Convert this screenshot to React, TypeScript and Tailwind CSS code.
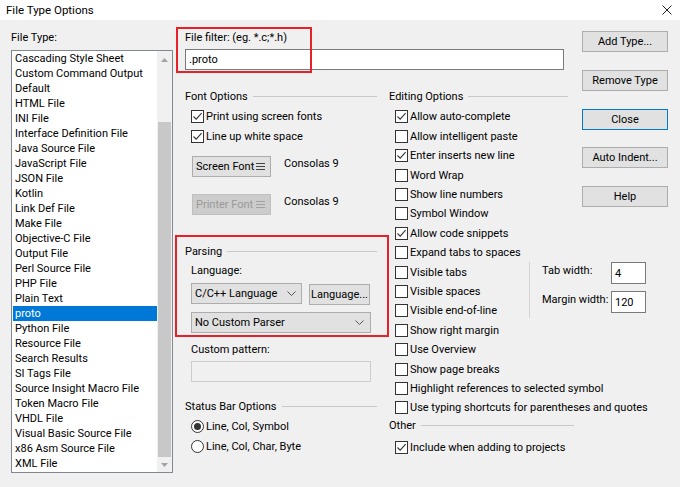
import React from "react";

const fileTypes = [
  "Cascading Style Sheet",
  "Custom Command Output",
  "Default",
  "HTML File",
  "INI File",
  "Interface Definition File",
  "Java Source File",
  "JavaScript File",
  "JSON File",
  "Kotlin",
  "Link Def File",
  "Make File",
  "Objective-C File",
  "Output File",
  "Perl Source File",
  "PHP File",
  "Plain Text",
  "proto",
  "Python File",
  "Resource File",
  "Search Results",
  "SI Tags File",
  "Source Insight Macro File",
  "Token Macro File",
  "VHDL File",
  "Visual Basic Source File",
  "x86 Asm Source File",
  "XML File",
];

function CheckBox({ checked }: { checked?: boolean }) {
  return (
    <span className="w-[13px] h-[13px] border border-[#333333] bg-white flex items-center justify-center shrink-0">
      {checked && (
        <svg width="11" height="11" viewBox="0 0 11 11">
          <path d="M1.5 5.5 L4.2 8.2 L9.6 2.2" stroke="#333333" strokeWidth="1.1" fill="none" />
        </svg>
      )}
    </span>
  );
}

function CheckRow({ label, checked }: { label: string; checked?: boolean }) {
  return (
    <div className="h-[19.4px] flex items-center gap-[2px] pl-[6px] whitespace-nowrap">
      <CheckBox checked={checked} />
      <span className="leading-[15px]">{label}</span>
    </div>
  );
}

function Radio({ label, selected }: { label: string; selected?: boolean }) {
  return (
    <div className="h-[20px] flex items-center gap-[2px] pl-[6px] whitespace-nowrap">
      <span className="w-[13px] h-[13px] rounded-full border border-[#333333] bg-white flex items-center justify-center shrink-0">
        {selected && <span className="w-[7px] h-[7px] rounded-full bg-[#333333]" />}
      </span>
      <span className="leading-[15px]">{label}</span>
    </div>
  );
}

function GroupHeader({ title, width }: { title: string; width: string }) {
  return (
    <div className={`h-[16px] flex items-center ${width}`}>
      <span className="leading-[15px] whitespace-nowrap">{title}</span>
      <span className="flex-1 ml-[5px] h-px bg-[#c8c8c8]" />
    </div>
  );
}

function Chevron() {
  return (
    <svg width="9" height="5" viewBox="0 0 9 5">
      <path d="M0.5 0.5 L4.5 4.5 L8.5 0.5" stroke="#555555" strokeWidth="1" fill="none" />
    </svg>
  );
}

function MenuLines({ color }: { color: string }) {
  return (
    <svg width="9" height="9" viewBox="0 0 9 9">
      <path d="M0 1.5 H9 M0 4.5 H9 M0 7.5 H9" stroke={color} strokeWidth="1" />
    </svg>
  );
}

function Button({ label, focused }: { label: string; focused?: boolean }) {
  return (
    <div
      className={`h-[21px] w-[86px] flex items-center justify-center bg-[#e1e1e1] border ${
        focused ? "border-[#0078d7]" : "border-[#adadad]"
      } leading-[15px]`}
    >
      {label}
    </div>
  );
}

export default function App() {
  return (
    <div className="w-[680px] h-[487px] bg-[#f0f0f0] text-[11px] text-black font-['Roboto','Noto_Sans_CJK_SC',sans-serif] overflow-hidden relative">
      {/* title bar */}
      <div className="h-[20px] bg-white flex items-center justify-between pl-[6px] pr-[8px]">
        <span className="leading-[15px] text-[11.5px]">File Type Options</span>
        <svg width="10" height="10" viewBox="0 0 10 10">
          <path d="M0.5 0.5 L9.5 9.5 M9.5 0.5 L0.5 9.5" stroke="#222222" strokeWidth="1" />
        </svg>
      </div>

      <div className="flex">
        {/* file type list */}
        <div className="ml-[11px] w-[162px] pt-[9.5px] shrink-0">
          <div className="leading-[15px] h-[15px]">File Type:</div>
          <div className="mt-[5.5px] h-[423px] border border-[#828790] bg-white flex">
            <div className="flex-1 overflow-hidden">
              {fileTypes.map((t) => (
                <div
                  key={t}
                  className={`h-[15px] leading-[15px] pl-[2px] ml-[1px] whitespace-nowrap ${
                    t === "proto" ? "bg-[#0078d7] text-white" : ""
                  }`}
                >
                  {t}
                </div>
              ))}
            </div>
            <div className="w-[15px] bg-[#f0f0f0] flex flex-col">
              <div className="h-[17px] flex items-center justify-center">
                <svg width="7" height="4" viewBox="0 0 7 4">
                  <path d="M0 4 L3.5 0 L7 4 Z" fill="#a3a3a3" />
                </svg>
              </div>
              <div className="h-[54px]" />
              <div className="flex-1 mx-[1px] bg-[#c8c8c8]" />
              <div className="h-[15px] flex items-center justify-center">
                <svg width="7" height="4" viewBox="0 0 7 4">
                  <path d="M0 0 L3.5 4 L7 0 Z" fill="#a3a3a3" />
                </svg>
              </div>
            </div>
          </div>
        </div>

        {/* options */}
        <div className="ml-[3px] w-[406px] shrink-0 pl-[9px] pt-[9.5px]">
          <div className="leading-[15px] h-[15px]">File filter: (eg. *.c;*.h)</div>
          <div className="mt-[4.5px] w-[379px] h-[21px] border border-[#7a7a7a] bg-white flex items-center pl-[3px] leading-[15px]">
            .proto
          </div>

          <div className="mt-[18px] flex">
            {/* left column */}
            <div className="w-[204px] shrink-0">
              <GroupHeader title="Font Options" width="w-[192px]" />
              <div className="mt-[3.3px]">
                <CheckRow label="Print using screen fonts" checked />
                <CheckRow label="Line up white space" checked />
              </div>
              <div className="mt-[10px] flex items-start pl-[7px]">
                <div className="w-[79px] h-[21px] bg-[#e1e1e1] border border-[#adadad] flex items-center pl-[3px] pr-[5px]">
                  <span className="leading-[15px] whitespace-nowrap">Screen Font</span>
                  <span className="ml-auto flex">
                    <MenuLines color="#444444" />
                  </span>
                </div>
                <span className="ml-[13px] leading-[15px]">Consolas 9</span>
              </div>
              <div className="mt-[17px] flex items-start pl-[7px]">
                <div className="w-[79px] h-[21px] bg-[#cccccc] border border-[#bfbfbf] flex items-center pl-[3px] pr-[5px] text-[#9a9a9a]">
                  <span className="leading-[15px] whitespace-nowrap">Printer Font</span>
                  <span className="ml-auto flex">
                    <MenuLines color="#a0a0a0" />
                  </span>
                </div>
                <span className="ml-[13px] leading-[15px]">Consolas 9</span>
              </div>

              <div className="mt-[28px]">
                <GroupHeader title="Parsing" width="w-[192px]" />
              </div>
              <div className="mt-[3.5px] pl-[6px] leading-[15px] h-[15px]">Language:</div>
              <div className="mt-[5.5px] pl-[6px] flex items-start">
                <div className="w-[111px] h-[21px] bg-[#e1e1e1] border border-[#adadad] flex items-center justify-between pl-[3px] pr-[5px]">
                  <span className="leading-[15px]">C/C++ Language</span>
                  <Chevron />
                </div>
                <div className="ml-[7px] mt-[1px] w-[61px] h-[21px] bg-[#e1e1e1] border border-[#adadad] flex items-center justify-center leading-[15px] whitespace-nowrap">
                  Language...
                </div>
              </div>
              <div className="mt-[7px] ml-[6px] w-[180px] h-[21px] bg-[#e1e1e1] border border-[#adadad] flex items-center justify-between pl-[3px] pr-[6px]">
                <span className="leading-[15px]">No Custom Parser</span>
                <Chevron />
              </div>
              <div className="mt-[8.5px] pl-[6px] leading-[15px] h-[15px]">Custom pattern:</div>
              <div className="mt-[4.5px] ml-[6px] w-[180px] h-[21px] border border-[#cccccc] bg-[#f0f0f0]" />

              <div className="mt-[16px]">
                <GroupHeader title="Status Bar Options" width="w-[192px]" />
              </div>
              <div className="mt-[2px]">
                <Radio label="Line, Col, Symbol" selected />
                <Radio label="Line, Col, Char, Byte" />
              </div>
            </div>

            {/* right column */}
            <div className="w-[193px] shrink-0">
              <GroupHeader title="Editing Options" width="w-[179px]" />
              <div className="mt-[3.3px]">
                <CheckRow label="Allow auto-complete" checked />
                <CheckRow label="Allow intelligent paste" />
                <CheckRow label="Enter inserts new line" checked />
                <CheckRow label="Word Wrap" />
                <CheckRow label="Show line numbers" />
                <CheckRow label="Symbol Window" />
                <CheckRow label="Allow code snippets" checked />
                <CheckRow label="Expand tabs to spaces" />
                <div className="flex">
                  <div className="w-[140px] shrink-0">
                    <CheckRow label="Visible tabs" />
                    <CheckRow label="Visible spaces" />
                    <CheckRow label="Visible end-of-line" />
                  </div>
                  <div className="h-[56px] border-l border-[#d4d4d4] pl-[12px] shrink-0 whitespace-nowrap">
                    <div className="flex items-start">
                      <span className="w-[69px] leading-[15px] mt-[0.5px]">Tab width:</span>
                      <div className="w-[35px] h-[22px] border border-[#7a7a7a] bg-white flex items-center pl-[3px] leading-[15px]">
                        4
                      </div>
                    </div>
                    <div className="mt-[7px] flex items-start">
                      <span className="w-[69px] leading-[15px] mt-[0.5px]">Margin width:</span>
                      <div className="w-[35px] h-[22px] border border-[#7a7a7a] bg-white flex items-center pl-[3px] leading-[15px]">
                        120
                      </div>
                    </div>
                  </div>
                </div>
                <CheckRow label="Show right margin" />
                <CheckRow label="Use Overview" />
                <CheckRow label="Show page breaks" />
                <CheckRow label="Highlight references to selected symbol" />
                <CheckRow label="Use typing shortcuts for parentheses and quotes" />
              </div>
              <GroupHeader title="Other" width="w-[185px]" />
              <div className="mt-[4px]">
                <CheckRow label="Include when adding to projects" checked />
              </div>
            </div>
          </div>
        </div>

        {/* dialog buttons */}
        <div className="w-[86px] shrink-0 pt-[11px] flex flex-col gap-[17.75px]">
          <Button label="Add Type..." />
          <Button label="Remove Type" />
          <Button label="Close" focused />
          <Button label="Auto Indent..." />
          <Button label="Help" />
        </div>
      </div>

      {/* red highlight annotations */}
      <div className="absolute left-[176px] top-[27px] w-[136px] h-[46px] border-2 border-[#e8202a] pointer-events-none" />
      <div className="absolute left-[175px] top-[235px] w-[214px] h-[102px] border-2 border-[#e8202a] pointer-events-none" />
    </div>
  );
}
